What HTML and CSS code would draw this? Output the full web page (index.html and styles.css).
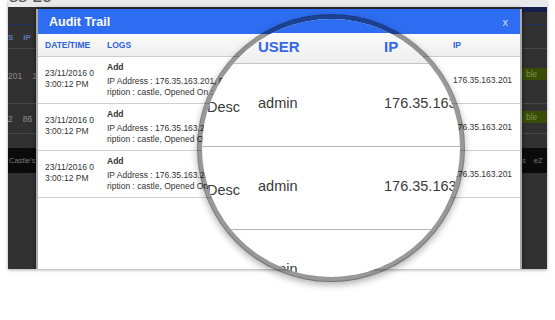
FILE: index.html
```html
<!DOCTYPE html>
<html>
<head>
    <meta charset="utf-8">
    <title>Audit Trail</title>
    <link rel="stylesheet" href="styles.css">
</head>
<body>
<div class="stage">
    <!-- page behind the dialog -->
    <div class="screen">
        <div class="bg-cap"><span class="bg-title">ss Lo</span></div>
        <div class="bg-row bg-top"><span class="bg-l"></span><span class="bg-r bg-nav"></span></div>
        <div class="bg-row bg-head"><span class="bg-l"><b>S</b><b class="gap">IP</b></span><span class="bg-r"></span></div>
        <div class="bg-row bg-r1"><span class="bg-l">201<span class="gap">176</span></span><span class="bg-r"><i class="bg-green">ble</i></span></div>
        <div class="bg-row bg-r2"><span class="bg-l">2<span class="gap">86</span></span><span class="bg-r"><i class="bg-green">ble</i></span></div>
        <div class="bg-gap"></div>
        <div class="bg-row bg-band"><span class="bg-l">Castle's C</span><span class="bg-r">s<span class="gap2">eZ</span></span></div>

        <div class="modal">
            <div class="modal-head">
                <span class="modal-title">Audit Trail</span>
                <span class="modal-close">x</span>
            </div>
            <div class="grid-head">
                <div class="c-date">DATE/TIME</div>
                <div class="c-logs">LOGS</div>
                <div class="c-ip">IP</div>
            </div>
            <div class="grid-row">
                <div class="c-date">23/11/2016 0<br>3:00:12 PM</div>
                <div class="c-logs"><b>Add</b>IP Address : 176.35.163.201, Desc<br>ription : castle, Opened On : 23/11/2016</div>
                <div class="c-ip">176.35.163.201</div>
            </div>
            <div class="grid-row">
                <div class="c-date">23/11/2016 0<br>3:00:12 PM</div>
                <div class="c-logs"><b>Add</b>IP Address : 176.35.163.201, Desc<br>ription : castle, Opened On : 23/11/2016</div>
                <div class="c-ip">176.35.163.201</div>
            </div>
            <div class="grid-row">
                <div class="c-date">23/11/2016 0<br>3:00:12 PM</div>
                <div class="c-logs"><b>Add</b>IP Address : 176.35.163.201, Desc<br>ription : castle, Opened On : 23/11/2016</div>
                <div class="c-ip">176.35.163.201</div>
            </div>
        </div>
    </div>

    <!-- magnifier -->
    <div class="lens">
        <div class="lens-blue"></div>
        <div class="lens-head">
            <div class="l-desc"></div>
            <div class="l-user">USER</div>
            <div class="l-ip">IP</div>
        </div>
        <div class="lens-row">
            <div class="l-desc">Desc</div>
            <div class="l-user">admin</div>
            <div class="l-ip">176.35.163</div>
        </div>
        <div class="lens-row">
            <div class="l-desc">Desc</div>
            <div class="l-user">admin</div>
            <div class="l-ip">176.35.163</div>
        </div>
        <div class="lens-row">
            <div class="l-desc">Desc</div>
            <div class="l-user">admin</div>
            <div class="l-ip">176.35.163</div>
        </div>
    </div>
</div>
</body>
</html>
```

FILE: styles.css
```css
*{
    margin: 0;
    padding: 0;
    box-sizing: border-box;
}
body{
    background: #fff;
    font-family: "Liberation Sans", Arial, sans-serif;
}
.stage{
    position: relative;
    width: 555px;
    height: 320px;
    overflow: hidden;
}

/* dark page behind */
.screen{
    position: relative;
    margin-left: 8px;
    width: 539px;
    height: 269px;
    background: #313131;
    box-shadow: 0 1px 3px rgba(0,0,0,0.35);
    overflow: hidden;
}
.bg-cap{
    height: 7px;
    background: #e9e9e9;
    overflow: hidden;
}
.bg-title{
    display: block;
    margin-top: -14px;
    padding-left: 1px;
    font-size: 18px;
    color: #555;
}
.bg-row{
    display: flex;
    justify-content: space-between;
    align-items: center;
    border-bottom: 1px solid #474747;
    font-size: 8.5px;
    color: #8e8e8e;
    white-space: nowrap;
}
.bg-l{
    width: 28px;
    overflow: hidden;
}
.bg-r{
    width: 25px;
    height: 100%;
    overflow: hidden;
    display: flex;
    align-items: center;
}
.gap{ margin-left: 10px; }
.gap2{ margin-left: 8px; }
.bg-top{
    height: 18px;
    border-bottom-color: #22346a;
}
.bg-nav{
    background: linear-gradient(#14204a 0, #14204a 5px, transparent 5px);
}
.bg-head{
    height: 24px;
}
.bg-head b{
    color: #5b78b8;
    font-size: 8px;
}
.bg-r1{ height: 55px; }
.bg-r2{ height: 30px; }
.bg-green{
    display: block;
    width: 25px;
    height: 12px;
    margin-top: -4px;
    padding-left: 4px;
    background: #394c08;
    color: #7f9246;
    font-style: normal;
    line-height: 12px;
}
.bg-gap{ height: 14px; }
.bg-band{
    height: 25px;
    background: #0b0b0b;
    border-bottom: 0;
    font-size: 7.5px;
    color: #7a7a7a;
}
.bg-band .bg-l{ padding-left: 1px; }

/* dialog */
.modal{
    position: absolute;
    left: 28px;
    top: 9px;
    bottom: 0;
    width: 486px;
    background: #fff;
    border-left: 2px solid #a9a9a9;
    border-right: 2px solid #a9a9a9;
    box-shadow: 0 0 4px rgba(0,0,0,0.6);
}
.modal-head{
    height: 25px;
    background: #2e6df1;
    display: flex;
    align-items: center;
    justify-content: space-between;
    padding: 0 12px 0 11px;
}
.modal-title{
    color: #fff;
    font-weight: bold;
    font-size: 12.5px;
}
.modal-close{
    color: #c9d9ff;
    font-size: 11px;
}
.grid-head, .grid-row{
    display: flex;
    align-items: center;
    border-bottom: 1px solid #cfcfcf;
}
.grid-head{
    height: 23px;
    background: linear-gradient(#fcfcfc, #eeeeee);
    font-size: 8.5px;
    font-weight: bold;
    color: #2c60dc;
}
.grid-row{
    height: 47px;
    font-size: 8.5px;
    line-height: 11px;
    color: #333;
}
.c-date{
    width: 62px;
    padding-left: 7px;
    white-space: nowrap;
}
.grid-row .c-date{ padding-bottom: 2px; }
.c-logs{
    flex: 1;
    padding-left: 7px;
    white-space: nowrap;
    overflow: hidden;
}
.c-logs b{
    display: block;
    margin-bottom: 3px;
}
.c-ip{
    width: 74px;
    padding-left: 7px;
    white-space: nowrap;
}

/* magnifier */
.lens{
    position: absolute;
    left: 197px;
    top: 14px;
    width: 268px;
    height: 268px;
    border-radius: 50%;
    border: 5px solid rgba(0,0,0,0.4);
    background: #fff;
    background-clip: padding-box;
    box-shadow: 0 3px 7px rgba(0,0,0,0.3);
    overflow: hidden;
}
.lens-blue{
    height: 14px;
    background: #2e6df1;
}
.lens-head, .lens-row{
    display: flex;
    align-items: center;
    white-space: nowrap;
}
.lens-head{
    height: 31px;
    padding-bottom: 3px;
    background: linear-gradient(#fcfcfc, #eeeeee);
    border-bottom: 1px solid #c4c4c4;
    font-size: 15px;
    font-weight: bold;
    color: #3467ea;
}
.lens-row{
    height: 83px;
    border-bottom: 1px solid #b4b4b4;
    font-size: 14.5px;
    color: #3a3a3a;
}
.l-desc{
    width: 56px;
    padding-left: 5px;
}
.lens-row .l-desc{ padding-top: 4px; }
.l-user{
    width: 126px;
}
.lens-row .l-user, .lens-row .l-ip{ padding-bottom: 4px; }
.l-ip{
    flex: 1;
}
```
